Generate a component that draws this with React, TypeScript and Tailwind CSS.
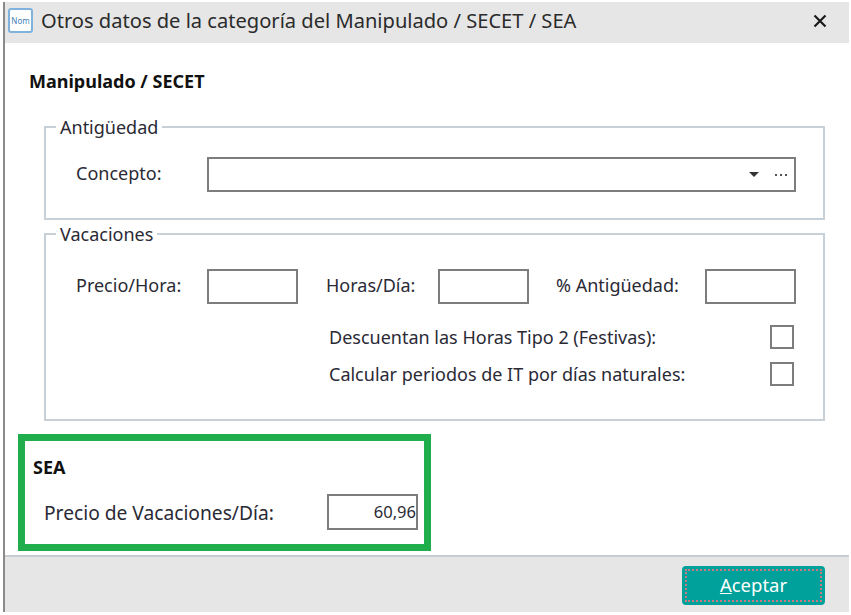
const font = "font-['Noto_Sans',sans-serif]"

function Box({ className = "" }: { className?: string }) {
  return <div className={`h-[35px] border-2 border-[#7d7d7d] bg-white ${className}`} />
}

function CheckRow({ label, last }: { label: string; last?: boolean }) {
  return (
    <div className={`flex items-center justify-between pl-[283px] pr-[29px] ${last ? "mt-[13px]" : "mt-[21px]"}`}>
      <span className="text-[18px] leading-[24px] text-[#2a2a35]">{label}</span>
      <div className="h-[24px] w-[24px] border-2 border-[#7d7d7d]" />
    </div>
  )
}

export default function App() {
  return (
    <div className={`${font} h-[615px] w-[851px] overflow-hidden bg-white pt-[2px] pr-[2px] pb-[3px] pl-[3px]`}>
      <div className="flex h-full flex-col border-l-2 border-[#8a8a8a]">
        {/* title bar */}
        <div className="flex h-[41px] items-center bg-[#e6e6e6] pb-[4px] pl-[3px] pr-[22px]">
          <div className="flex h-[25px] w-[25px] items-center justify-center rounded-[3px] border-2 border-[#7fb2dc] bg-white text-[8px] leading-none text-[#3f7fb5]">
            Nom
          </div>
          <span className="ml-[8px] text-[20.1px] leading-[24px] text-[#2b2b2b]">
            Otros datos de la categoría del Manipulado / SECET / SEA
          </span>
          <svg className="ml-auto" width="14" height="14" viewBox="0 0 14 14">
            <path d="M1.5 1.5 12.5 12.5M12.5 1.5 1.5 12.5" stroke="#1a1a1a" strokeWidth="2.2" />
          </svg>
        </div>

        {/* body */}
        <div className="flex-1 bg-white pl-[24px] pr-[24px]">
          <h1 className="mt-[26px] text-[18px] leading-[24px] font-bold text-[#111]">Manipulado / SECET</h1>

          <fieldset className="ml-[15px] mt-[22px] h-[105px] border-2 border-[#c6d0d6] pt-[18px]">
            <legend className="ml-[10px] px-[4px] text-[18px] leading-[24px] text-[#2a2a35]">Antigüedad</legend>
            <div className="flex items-center pl-[30px] pr-[27px]">
              <span className="w-[131px] pb-[2px] text-[18px] text-[#2a2a35]">Concepto:</span>
              <div className="flex h-[35px] flex-1 items-center justify-end gap-[16px] border-2 border-[#7d7d7d] pr-[7px]">
                <svg width="10" height="5" viewBox="0 0 10 5">
                  <path d="M0 0h10L5 5z" fill="#333" />
                </svg>
                <span className="flex gap-[3px]">
                  <i className="h-[2px] w-[2px] bg-[#555]" />
                  <i className="h-[2px] w-[2px] bg-[#555]" />
                  <i className="h-[2px] w-[2px] bg-[#555]" />
                </span>
              </div>
            </div>
          </fieldset>

          <fieldset className="ml-[15px] mt-[2px] h-[199px] border-2 border-[#c6d0d6] pt-[23px]">
            <legend className="ml-[10px] px-[4px] text-[18px] leading-[24px] text-[#2a2a35]">Vacaciones</legend>
            <div className="flex items-center pl-[30px] text-[18px] text-[#2a2a35]">
              <span className="w-[131px] pb-[2px]">Precio/Hora:</span>
              <Box className="w-[91px]" />
              <span className="ml-[28px] w-[112px] pb-[2px]">Horas/Día:</span>
              <Box className="w-[91px]" />
              <span className="ml-[27px] w-[149px] whitespace-nowrap pb-[2px]">% Antigüedad:</span>
              <Box className="w-[91px]" />
            </div>
            <CheckRow label="Descuentan las Horas Tipo 2 (Festivas):" />
            <CheckRow label="Calcular periodos de IT por días naturales:" last />
          </fieldset>

          <div className="-ml-[11px] mt-[13px] h-[117px] w-[413px] border-[7px] border-[#1fae4b] pl-[8px]">
            <h2 className="mt-[14px] text-[18px] leading-[24px] font-bold text-[#111]">SEA</h2>
            <div className="mt-[15px] flex items-center pl-[11px]">
              <span className="w-[283px] whitespace-nowrap pt-[3px] text-[19.2px] text-[#2a2a35]">Precio de Vacaciones/Día:</span>
              <div className="flex h-[36px] w-[91px] items-center justify-end border-2 border-[#7d7d7d] text-[16.5px] text-[#2a2a35]">
                60,96
              </div>
            </div>
          </div>
        </div>

        {/* footer */}
        <div className="flex h-[57px] items-start justify-end border-t-2 border-[#c6ced3] bg-[#e6e6e6] pr-[24px] pt-[9px]">
          <button className="h-[39px] w-[143px] rounded-[4px] bg-[#00a19a] p-[3px] text-white">
            <span className="flex h-full w-full items-center justify-center border-2 border-dotted border-[#c97a80] text-[18.5px] leading-none">
              <span><span className="underline">A</span>ceptar</span>
            </span>
          </button>
        </div>
      </div>
    </div>
  )
}
